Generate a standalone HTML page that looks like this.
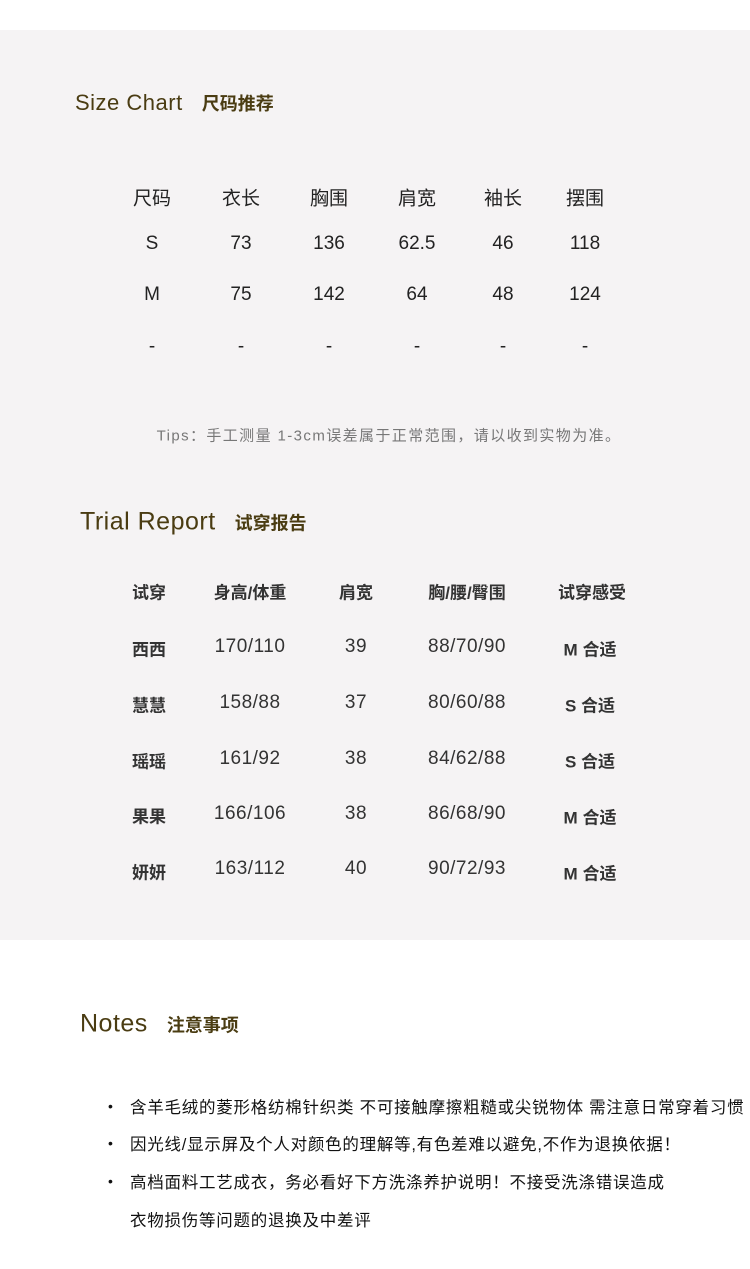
<!DOCTYPE html>
<html><head><meta charset="utf-8"><style>
*{margin:0;padding:0}
body{width:750px;height:1269px;background:#fff;position:relative;overflow:hidden;font-family:"Liberation Sans","Noto Sans CJK SC",sans-serif}
.bg{position:absolute;left:0;top:30px;width:750px;height:910px;background:#f5f3f4}
.t{position:absolute;white-space:nowrap;transform:translate(-50%,-50%);color:#222}
.h{position:absolute;white-space:nowrap;color:#4a3c12;transform:translateY(-50%)}
.h .en{font-family:"Liberation Sans",sans-serif;letter-spacing:0.5px}
.h .cn{font-weight:bold;font-size:18px;margin-left:19px}
.s{font-size:19px}
.r{font-size:19px;color:#333;letter-spacing:0.5px}
.rb{font-size:17px;font-weight:bold;color:#333}
.n{position:absolute;left:130px;white-space:nowrap;font-size:16.5px;letter-spacing:0.75px;color:#111;transform:translateY(-50%)}
.d{position:absolute;left:108px;font-size:14px;color:#111;transform:translateY(-50%)}
</style></head><body>
<div class="bg"></div>
<div class="h" style="left:75px;top:103px"><span class="en" style="font-size:22px">Size Chart</span><span class="cn">尺码推荐</span></div>

<div class="t s" style="left:152px;top:197px">尺码</div><div class="t s" style="left:241px;top:197px">衣长</div><div class="t s" style="left:329px;top:197px">胸围</div><div class="t s" style="left:417px;top:197px">肩宽</div><div class="t s" style="left:503px;top:197px">袖长</div><div class="t s" style="left:585px;top:197px">摆围</div>
<div class="t s" style="left:152px;top:244px">S</div><div class="t s" style="left:241px;top:244px">73</div><div class="t s" style="left:329px;top:244px">136</div><div class="t s" style="left:417px;top:244px">62.5</div><div class="t s" style="left:503px;top:244px">46</div><div class="t s" style="left:585px;top:244px">118</div>
<div class="t s" style="left:152px;top:295px">M</div><div class="t s" style="left:241px;top:295px">75</div><div class="t s" style="left:329px;top:295px">142</div><div class="t s" style="left:417px;top:295px">64</div><div class="t s" style="left:503px;top:295px">48</div><div class="t s" style="left:585px;top:295px">124</div>
<div class="t s" style="left:152px;top:347px">-</div><div class="t s" style="left:241px;top:347px">-</div><div class="t s" style="left:329px;top:347px">-</div><div class="t s" style="left:417px;top:347px">-</div><div class="t s" style="left:503px;top:347px">-</div><div class="t s" style="left:585px;top:347px">-</div>

<div class="t" style="left:389px;top:435px;font-size:15px;letter-spacing:1.4px;color:#777">Tips：手工测量 1-3cm误差属于正常范围，请以收到实物为准。</div>

<div class="h" style="left:80px;top:522px"><span class="en" style="font-size:25px">Trial Report</span><span class="cn">试穿报告</span></div>

<div class="t rb" style="left:149px;top:591px">试穿</div><div class="t rb" style="left:250px;top:591px">身高/体重</div><div class="t rb" style="left:356px;top:591px">肩宽</div><div class="t rb" style="left:467px;top:591px">胸/腰/臀围</div><div class="t rb" style="left:592px;top:591px">试穿感受</div>

<div class="t rb" style="left:149px;top:648px">西西</div><div class="t r" style="left:250px;top:647px">170/110</div><div class="t r" style="left:356px;top:647px">39</div><div class="t r" style="left:467px;top:647px">88/70/90</div><div class="t rb" style="left:590px;top:648px">M 合适</div>
<div class="t rb" style="left:149px;top:704px">慧慧</div><div class="t r" style="left:250px;top:703px">158/88</div><div class="t r" style="left:356px;top:703px">37</div><div class="t r" style="left:467px;top:703px">80/60/88</div><div class="t rb" style="left:590px;top:704px">S 合适</div>
<div class="t rb" style="left:149px;top:760px">瑶瑶</div><div class="t r" style="left:250px;top:759px">161/92</div><div class="t r" style="left:356px;top:759px">38</div><div class="t r" style="left:467px;top:759px">84/62/88</div><div class="t rb" style="left:590px;top:760px">S 合适</div>
<div class="t rb" style="left:149px;top:815px">果果</div><div class="t r" style="left:250px;top:814px">166/106</div><div class="t r" style="left:356px;top:814px">38</div><div class="t r" style="left:467px;top:814px">86/68/90</div><div class="t rb" style="left:590px;top:816px">M 合适</div>
<div class="t rb" style="left:149px;top:871px">妍妍</div><div class="t r" style="left:250px;top:869px">163/112</div><div class="t r" style="left:356px;top:869px">40</div><div class="t r" style="left:467px;top:869px">90/72/93</div><div class="t rb" style="left:590px;top:872px">M 合适</div>

<div class="h" style="left:80px;top:1024px"><span class="en" style="font-size:25px">Notes</span><span class="cn">注意事项</span></div>

<div class="d" style="top:1106px">•</div><div class="n" style="top:1106px">含羊毛绒的菱形格纺棉针织类 不可接触摩擦粗糙或尖锐物体 需注意日常穿着习惯</div>
<div class="d" style="top:1143px">•</div><div class="n" style="top:1143px">因光线/显示屏及个人对颜色的理解等,有色差难以避免,不作为退换依据！</div>
<div class="d" style="top:1181px">•</div><div class="n" style="top:1181px">高档面料工艺成衣，务必看好下方洗涤养护说明！不接受洗涤错误造成</div>
<div class="n" style="top:1219px">衣物损伤等问题的退换及中差评</div>
</body></html>
